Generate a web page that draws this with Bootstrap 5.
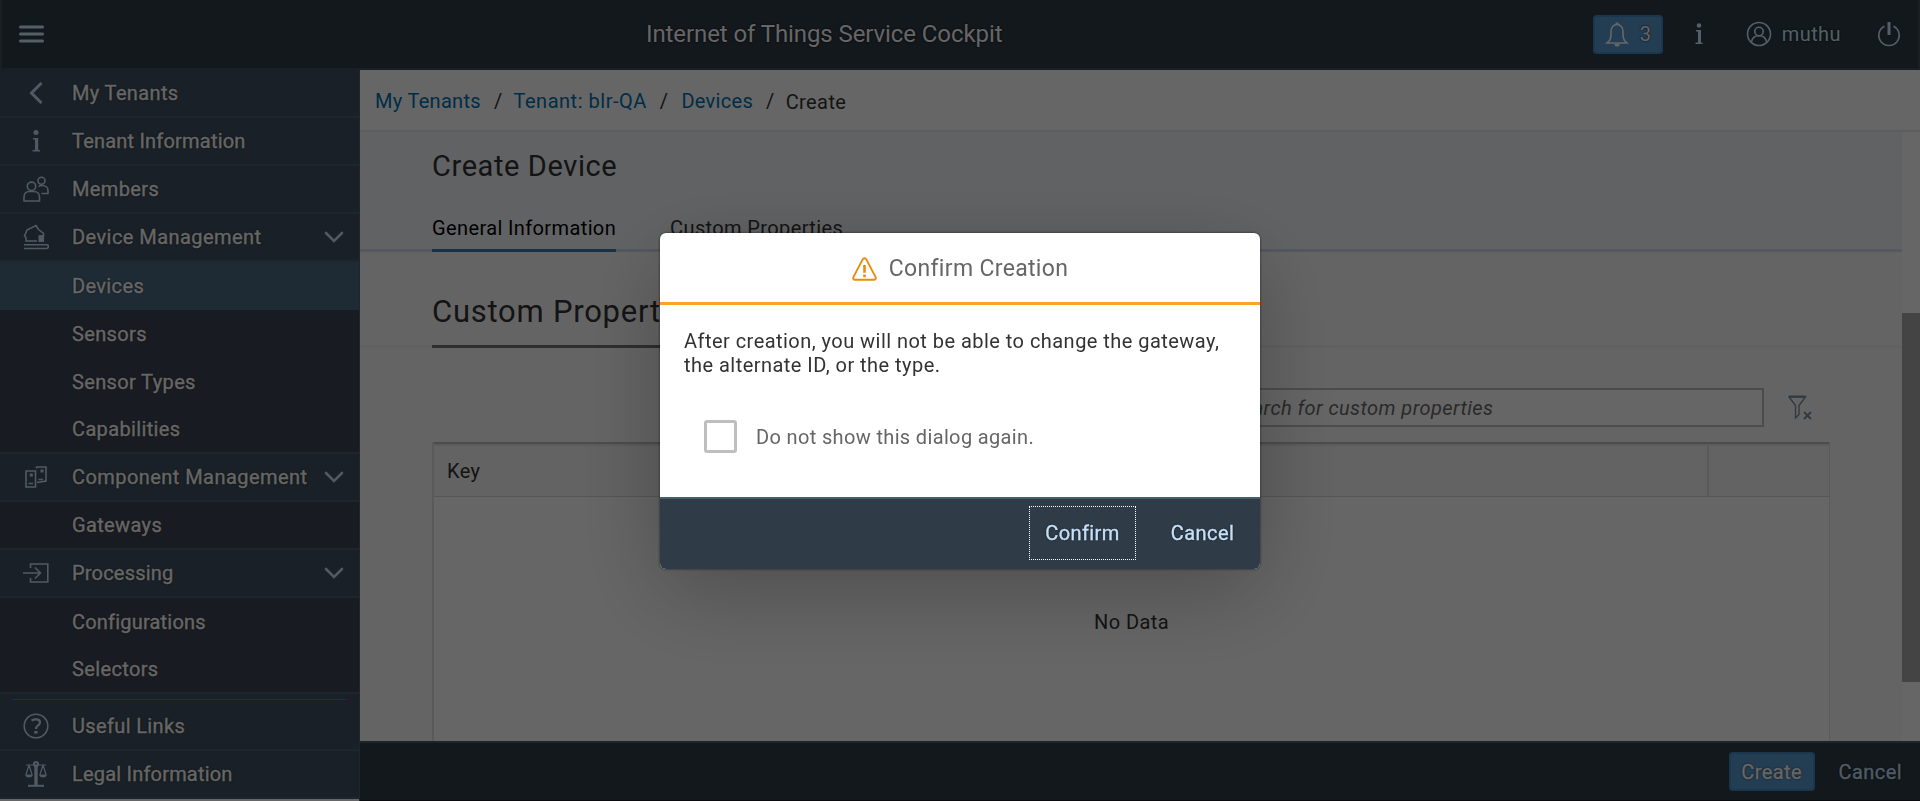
<!DOCTYPE html>
<html lang="en">
<head>
<meta charset="utf-8">
<meta name="viewport" content="width=device-width, initial-scale=1">
<title>Internet of Things Service Cockpit</title>
<link href="https://cdn.jsdelivr.net/npm/bootstrap@5.3.0/dist/css/bootstrap.min.css" rel="stylesheet">
<style>
  body { font-family: Roboto, "Open Sans", sans-serif; font-size: 20px; line-height: 24px; letter-spacing: .42px; color: #333; background: #fff; }
  svg { display: block; fill: none; stroke: currentColor; stroke-width: 1.6; flex: none; }

  .shell-bar { height: 70px; background: #2f3c48; border: 2px solid #3f4f61; border-top: 0; color: #d1efff; text-shadow: 0 0 2px #000; }
  .shell-title { font-size: 24px; letter-spacing: -.09px; color: #fff; left: 644px; top: 22px; }
  .shell-menu { margin-left: 17px; }
  .bell-btn { width: 70px; height: 39px; background: #5899cf; border: 2px solid #4289c4; border-radius: 4px; color: #fff; }

  .side-nav { width: 360px; height: 731px; background: #3f5161; border-right: 1px solid #4c6072; color: #fff; text-shadow: 0 0 2px #000; -webkit-text-stroke: .35px #fff; letter-spacing: .36px; }
  .side-item { height: 48px; border-bottom: 2px solid #4c6072; }
  .side-item .glyph { width: 72px; color: #c5e1fa; }
  .side-item .chev { margin-left: auto; margin-right: 14px; color: #c5e1fa; stroke-width: 2.6; stroke-linecap: round; }
  .side-sub { height: 48px; padding-left: 72px; background: #3e4655; }
  .side-sub.last { border-bottom: 2px solid #4c6072; }
  .side-sub.current { background: #4b6c85; }
  .side-rule { height: 9px; padding: 5px 12px 0; }
  .side-rule div { height: 1px; background: #0891c0; }
  .side-nav .snug { letter-spacing: .2px; }

  .crumb-bar { height: 62px; background: #fff; border-bottom: 2px solid #e9e9e9; padding: 1px 15px 0; letter-spacing: .3px; }
  .crumb-bar a { color: #0070b1; }
  .object-head { height: 120px; background: #f2f6fa; border-bottom: 3px solid #cfdfed; padding-left: 72px; }
  .object-title { font-size: 29px; line-height: 32px; letter-spacing: .6px; padding-top: 18px; }
  .anchor-tab { height: 37px; margin-bottom: -3px; padding-top: 1px; letter-spacing: .38px; }
  .anchor-tab.current { border-bottom: 3px solid #427cac; color: #000; }
  .section-head { height: 96px; border-bottom: 3px solid #f2f2f2; padding-left: 72px; background: #fbfbfb; }
  .section-title { font-size: 31px; line-height: 36px; height: 96px; letter-spacing: .75px; padding-top: 42px; border-bottom: 3px solid #757575; }
  .content-area { background: #fbfbfb; }
  .search-box { width: 550px; height: 39px; margin-left: 782px; border: 2px solid #bfbfbf; background: #fff; padding-left: 14px; font-style: italic; color: #6a6a6a; letter-spacing: .42px; }
  .props-table { width: 1398px; margin: 15px 0 0 72px; border: solid #e0e0e0; border-width: 0 1px 0 2px; background: #fff; }
  .props-head { height: 55px; border-top: 2px solid #bfbfbf; border-bottom: 1px solid #d6d6d6; background: #f7f7f7; box-shadow: inset 0 2px #e5e5e5; }
  .props-last { width: 122px; border-left: 2px solid #e0e0e0; margin-top: 2px; }
  .scroll-track { width: 18px; background: #fff; padding-top: 181px; }
  .scroll-thumb { height: 369px; background: #ababab; }
  .page-foot { height: 60px; background: #2f3c48; border-top: 2px solid #445e6c; border-bottom: 1px solid #151b20; padding-right: 18px; text-shadow: 0 0 2px #000; color: #c5e1fa; -webkit-text-stroke: .35px; }
  .create-btn { width: 86px; height: 39px; background: #5899cf; border: 2px solid #4289c4; border-radius: 4px; color: #fff; }

  .modal-backdrop { --bs-backdrop-opacity: .6; }
  .modal-dialog.confirm { width: 600px; max-width: 600px; margin: 233px auto 0; }
  .confirm .modal-content { border: 0; border-radius: 6px; overflow: hidden; box-shadow: 0 0 3px rgba(0,0,0,.6), 0 22px 90px rgba(0,0,0,.25); height: 336px; color: #333; }
  .confirm .modal-header { height: 72px; border-bottom: 3px solid #f9a429; padding: 2px 0 0; border-radius: 0; color: #666; }
  .confirm .modal-title { font-size: 23px; line-height: 28px; letter-spacing: .33px; font-weight: 400; }
  .confirm .modal-body { padding: 24px 24px 0; letter-spacing: .46px; }
  .confirm .modal-footer { height: 72px; background: #2f3c48; border-top: 2px solid #445e6c; border-radius: 0; padding: 0 8px 2px 0; color: #c5e1fa; text-shadow: 0 0 2px #000; -webkit-text-stroke: .35px; }
  .check-box { width: 33px; height: 33px; border: 3px solid #bfbfbf; border-radius: 3px; }
  .foot-action { height: 54px; width: 99px; margin: 0 !important; }
  .foot-action.focused { width: 107px; outline: 1px dotted #fff; outline-offset: -1px; margin-right: 17px !important; }
</style>
</head>
<body class="overflow-hidden vh-100">

<header class="shell-bar d-flex align-items-center position-relative">
  <svg class="shell-menu" width="25" height="18" viewBox="0 0 25 18" stroke-linecap="round" style="stroke-width:3"><path d="M1.500 2h22M1.500 9h22M1.500 16h22"/></svg>
  <div class="shell-title position-absolute">Internet of Things Service Cockpit</div>
  <div class="bell-btn ms-auto d-flex align-items-center">
    <svg width="28" height="28" viewBox="0 0 28 28" style="margin-left:8px"><path d="M6.500 20.500c2-3 1.500-5 1.500-9 0-4 2.500-7 6-7s6 3 6 7c0 4-.5 6 1.500 9l2.500 2.500H4z"/><path d="M11 24h6l-1.500 2.500h-3zM12.500 2.500h3v2h-3z" fill="currentColor" stroke="none"/></svg>
    <span style="margin-left:9px">3</span>
  </div>
  <svg width="10" height="24" viewBox="0 0 10 24" style="margin:0 42px 0 31px"><circle cx="5" cy="3.500" r="2.300" fill="currentColor" stroke="none"/><path d="M2 9.500h2v11H1.500v1.500h7v-1.500H7v-12.500H2z" fill="currentColor" stroke="none"/></svg>
  <svg width="26" height="26" viewBox="0 0 26 26"><circle cx="13" cy="13" r="11.500"/><circle cx="13" cy="10.500" r="4.200"/><path d="M5.500 21c.5-4 3-6.300 7.500-6.300s7 2.300 7.500 6.300"/></svg>
  <span style="margin:0 36px 0 10px">muthu</span>
  <svg width="24" height="26" viewBox="0 0 24 26" style="margin-right:17px"><path d="M7.500 5.200a10.200 10.200 0 1 0 9 0"/><path d="M12 1v13" style="stroke-width:3"/></svg>
</header>

<div class="d-flex">
  <nav class="side-nav flex-shrink-0">
    <div class="side-item d-flex align-items-center"><span class="glyph d-flex justify-content-center"><svg width="14" height="22" viewBox="0 0 14 22" style="stroke-width:3"><path d="M12.500 1L2.500 11l10 10"/></svg></span>My Tenants</div>
    <div class="side-item snug d-flex align-items-center"><span class="glyph d-flex justify-content-center"><svg width="10" height="24" viewBox="0 0 10 24"><circle cx="5" cy="3.500" r="2.500" fill="currentColor" stroke="none"/><path d="M2 9h5.200v12H9v1.500H1.500V21H4v-10.500H2z" fill="currentColor" stroke="none"/></svg></span>Tenant Information</div>
    <div class="side-item d-flex align-items-center"><span class="glyph d-flex justify-content-center"><svg width="26" height="26" viewBox="0 0 26 26"><circle cx="8.500" cy="10.300" r="4.200"/><path d="M1 25v-4c0-3.500 2.500-5.500 5-5.500h5c3 0 5.500 2 5.500 5.500v4z"/><circle cx="18.500" cy="4.800" r="3.500"/><path d="M15.500 10.500c1-.8 2-1 3.500-1 3.500 0 6 2 6 5v3h-6.500"/></svg></span>Members</div>
    <div class="side-item d-flex align-items-center" style="letter-spacing:.44px"><span class="glyph d-flex justify-content-center"><svg width="26" height="26" viewBox="0 0 26 26"><path d="M14 17H3V13.500L1.500 12 4 6l9-4.500 2.500 4 5 4v2.500h-4.500"/><path d="M15.500 11.500H21V18h-5.500z" fill="currentColor" stroke="none"/><path d="M1 20.700h22.500a1.700 1.700 0 0 1 0 3.800H1"/></svg></span>Device Management<svg class="chev" width="22" height="14" viewBox="0 0 22 14"><path d="M3 3l8 8 8-8"/></svg></div>
    <div class="side-sub current d-flex align-items-center">Devices</div>
    <div class="side-sub d-flex align-items-center">Sensors</div>
    <div class="side-sub d-flex align-items-center">Sensor Types</div>
    <div class="side-sub last d-flex align-items-center">Capabilities</div>
    <div class="side-item d-flex align-items-center" style="letter-spacing:.44px"><span class="glyph d-flex justify-content-center"><svg width="22" height="22" viewBox="0 0 22 22"><path d="M1 5h9.500v16H1zM11.500 2.500V1H21v14l-9 1.500"/><path d="M3.500 17.500h4.500M13.500 13.500h4.500"/><path d="M4.800 7.500h3v3h-3zM15.500 3.500h3v3h-3z" fill="currentColor" stroke="none"/></svg></span>Component Management<svg class="chev" width="22" height="14" viewBox="0 0 22 14"><path d="M3 3l8 8 8-8"/></svg></div>
    <div class="side-sub last d-flex align-items-center">Gateways</div>
    <div class="side-item snug d-flex align-items-center"><span class="glyph d-flex justify-content-center"><svg width="26" height="20" viewBox="0 0 26 20"><path d="M7.500 5V1h17.300v18H7.500v-4M0 10h17.500M12 4.500l5.500 5.500-5.500 5.500"/></svg></span>Processing<svg class="chev" width="22" height="14" viewBox="0 0 22 14"><path d="M3 3l8 8 8-8"/></svg></div>
    <div class="side-sub snug d-flex align-items-center">Configurations</div>
    <div class="side-sub last d-flex align-items-center">Selectors</div>
    <div class="side-rule"><div></div></div>
    <div class="side-item d-flex align-items-center"><span class="glyph d-flex justify-content-center"><svg width="26" height="26" viewBox="0 0 26 26"><circle cx="13" cy="13" r="11.800"/><path d="M8.500 7.500c3-1.800 8.500-1.800 8.500 2 0 3-4 3-4 6.500" style="stroke-width:2.200"/><path d="M11.200 18h3.400v2.600h-3.400z" fill="currentColor" stroke="none"/></svg></span>Useful Links</div>
    <div class="side-item snug d-flex align-items-center"><span class="glyph d-flex justify-content-center"><svg width="22" height="26" viewBox="0 0 22 26" style="stroke-width:1.200"><path d="M11 4v20" style="stroke-width:3.400"/><circle cx="11" cy="3" r="2" style="stroke-width:2"/><path d="M3 24.800h16" style="stroke-width:2"/><path d="M1 4h20M4 4L1 13.500M4 4l3 9.500M18 4l-3 9.500M18 4l3 9.500"/><path d="M.8 14h6.400c-.5 2.600-5.900 2.600-6.400 0zM14.800 14h6.400c-.5 2.600-5.900 2.600-6.400 0z" fill="currentColor"/></svg></span>Legal Information</div>
    <div class="bg-white" style="height:2px"></div>
  </nav>

  <main class="flex-grow-1 d-flex flex-column" style="height:731px">
    <div class="crumb-bar d-flex align-items-center flex-shrink-0">
      <a class="text-decoration-none" href="#">My Tenants</a><span style="margin:0 11px 0 13px">/</span>
      <a class="text-decoration-none" href="#" style="letter-spacing:.52px">Tenant: blr-QA</a><span style="margin:0 13px 0 13px">/</span>
      <a class="text-decoration-none" href="#">Devices</a><span style="margin:0 11px 0 13px">/</span>
      <span style="padding-top:2px;letter-spacing:.42px">Create</span>
    </div>
    <div class="d-flex flex-grow-1 overflow-hidden">
      <div class="flex-grow-1 d-flex flex-column">
        <div class="object-head d-flex flex-column">
          <div class="object-title">Create Device</div>
          <div class="d-flex mt-auto" style="gap:54px">
            <div class="anchor-tab current">General Information</div>
            <div class="anchor-tab">Custom Properties</div>
          </div>
        </div>
        <div class="section-head d-flex"><div class="section-title">Custom Properties</div></div>
        <div class="content-area flex-grow-1 d-flex flex-column">
          <div class="d-flex align-items-center" style="margin-top:40px;padding-left:72px">
            <div class="search-box d-flex align-items-center">Search for custom properties</div>
            <svg width="25" height="25" viewBox="0 0 25 25" style="margin-left:24px;color:#7b8fa3;stroke-width:1.400"><path d="M1 2h16.500L11 10.500v9L7.500 23V10.500z"/><path d="M1 1.500h16.500" style="stroke-width:2"/><path d="M16 17l7 7M23 17l-7 7" style="stroke-width:2"/></svg>
          </div>
          <div class="props-table d-flex flex-column flex-grow-1">
            <div class="props-head d-flex"><div class="flex-grow-1 d-flex align-items-center" style="padding:2px 0 0 13px">Key</div><div class="props-last"></div></div>
            <div class="text-center" style="padding-top:113px">No Data</div>
          </div>
        </div>
      </div>
      <div class="scroll-track flex-shrink-0"><div class="scroll-thumb"></div></div>
    </div>
    <footer class="page-foot d-flex align-items-center flex-shrink-0">
      <div class="create-btn ms-auto d-flex align-items-center justify-content-center">Create</div>
      <span style="margin-left:24px">Cancel</span>
    </footer>
  </main>
</div>

<div class="modal-backdrop show"></div>
<div class="modal d-block overflow-hidden" role="dialog">
  <div class="modal-dialog confirm">
    <div class="modal-content">
      <div class="modal-header justify-content-center">
        <svg width="25" height="24" viewBox="0 0 25 24" style="margin-right:12px;color:#ea8a0c;stroke-width:1.900"><path d="M12.500 1.200c.8 0 1.400.4 1.800 1.200l9.200 17.500c.7 1.500 0 2.900-1.700 2.900H3.200c-1.700 0-2.400-1.400-1.700-2.900L10.700 2.400c.4-.8 1-1.200 1.800-1.200z"/><path d="M12.500 8v7.800M12.500 17.500v2.800" style="stroke-width:2.600"/></svg>
        <h1 class="modal-title mb-0">Confirm Creation</h1>
      </div>
      <div class="modal-body">
        <div>After creation, you will not be able to change the gateway,<br>the alternate ID, or the type.</div>
        <div class="d-flex align-items-center" style="margin:43px 0 0 20px;color:#666"><span class="check-box"></span><span style="margin-left:19px;letter-spacing:.35px">Do not show this dialog again.</span></div>
      </div>
      <div class="modal-footer flex-nowrap">
        <div class="foot-action focused d-flex align-items-center justify-content-center">Confirm</div>
        <div class="foot-action d-flex align-items-center justify-content-center">Cancel</div>
      </div>
    </div>
  </div>
</div>
<script src="https://cdn.jsdelivr.net/npm/bootstrap@5.3.0/dist/js/bootstrap.bundle.min.js"></script>
</body>
</html>
